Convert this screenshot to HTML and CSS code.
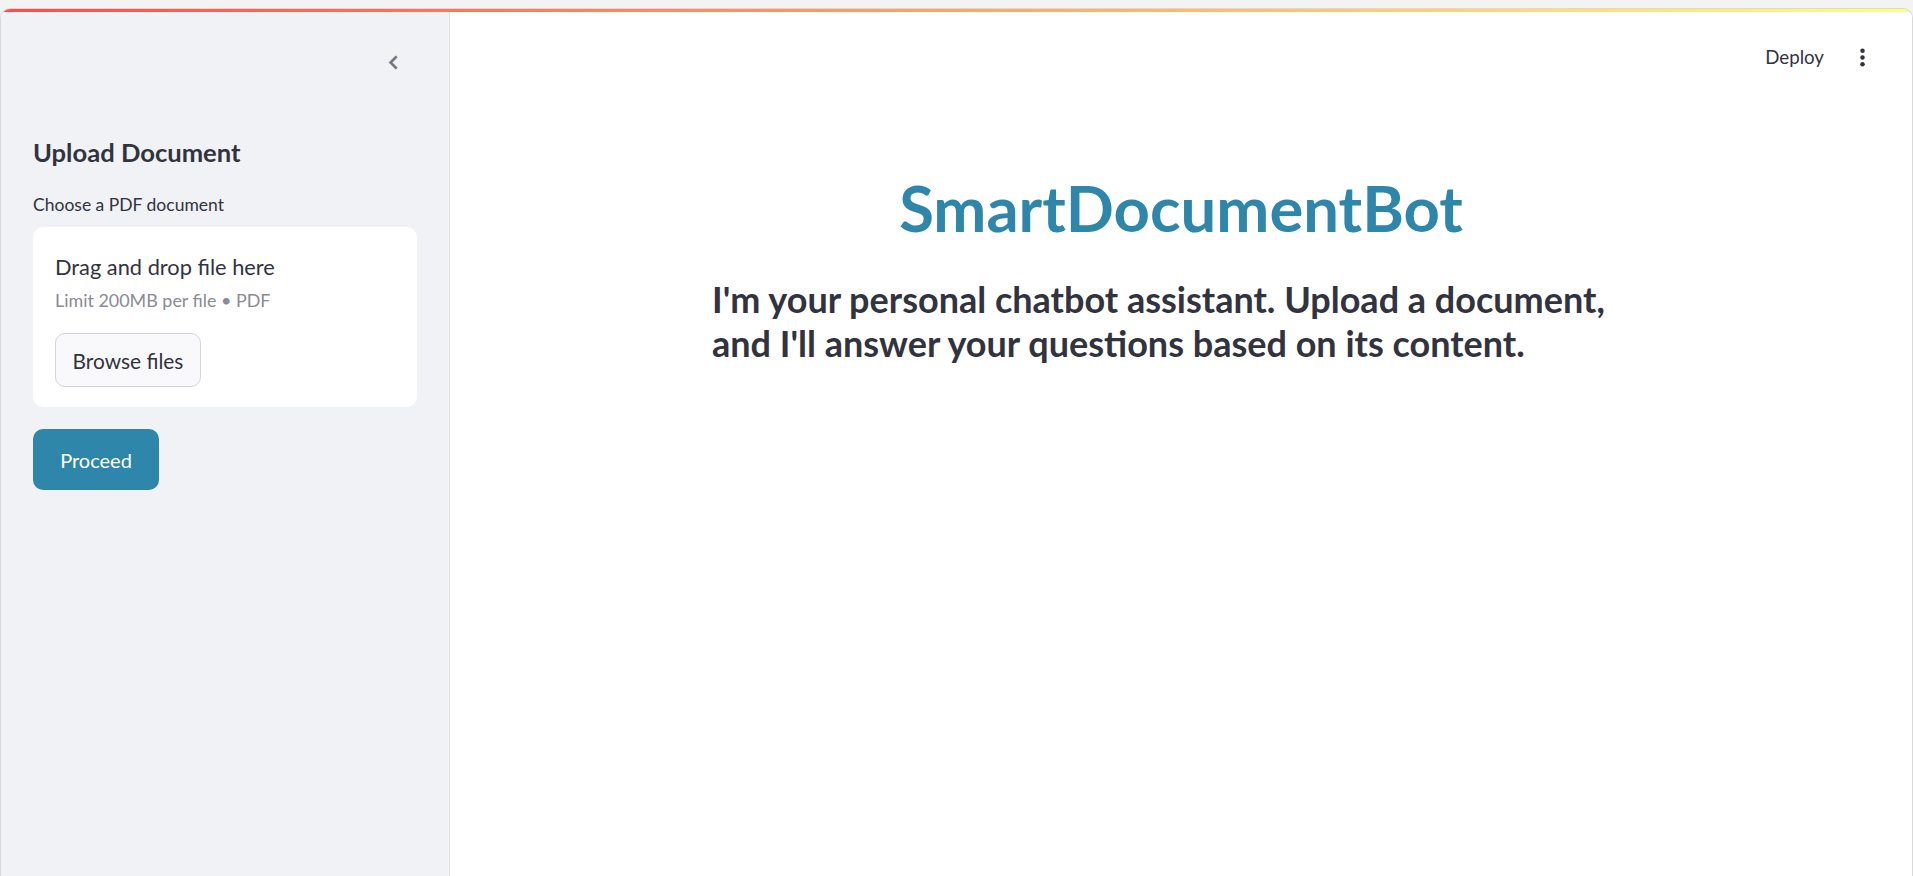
FILE: index.html
```html
<!DOCTYPE html>
<html lang="en">
<head>
<meta charset="utf-8">
<title>SmartDocumentBot</title>
<link rel="stylesheet" href="styles.css">
</head>
<body>
<div class="frame">
  <div class="decoration"></div>
  <div class="app">
    <aside class="sidebar">
      <div class="sidebar-top">
        <button class="collapse" aria-label="Collapse sidebar">
          <svg viewBox="0 0 24 24" width="27" height="27"><path d="M15.41 7.41L14 6l-6 6 6 6 1.41-1.41L10.83 12z" fill="currentColor" stroke="currentColor" stroke-width="0.4"/></svg>
        </button>
      </div>
      <h3 class="side-title">Upload Document</h3>
      <label class="field-label">Choose a PDF document</label>
      <section class="dropzone">
        <div class="dz-title">Drag and drop file here</div>
        <div class="dz-hint">Limit 200MB per file • PDF</div>
        <button class="btn-secondary">Browse files</button>
      </section>
      <button class="btn-primary">Proceed</button>
    </aside>
    <main class="main">
      <header class="toolbar">
        <span class="deploy">Deploy</span>
        <button class="kebab" aria-label="Main menu">
          <svg viewBox="0 0 24 24" width="27" height="27"><circle cx="12" cy="6" r="2" fill="currentColor"/><circle cx="12" cy="12" r="2" fill="currentColor"/><circle cx="12" cy="18" r="2" fill="currentColor"/></svg>
        </button>
      </header>
      <div class="block">
        <h1 class="title">SmartDocumentBot</h1>
        <p class="intro">I'm your personal chatbot assistant. Upload a document, and I'll answer your questions based on its content.</p>
      </div>
    </main>
  </div>
</div>
</body>
</html>
```
FILE: styles.css
```css
* { box-sizing: border-box; }
html, body { margin: 0; height: 100%; }
body {
  background: #f3f3f3;
  font-family: Lato, "Open Sans", sans-serif;
  color: #31333f;
}
button { font-family: inherit; }

.frame {
  margin-top: 8px;
  height: calc(100vh - 8px);
  border: 1px solid #d9d9d9;
  border-bottom: none;
  border-radius: 10px 10px 0 0;
  overflow: hidden;
  background: #fff;
  display: flex;
  flex-direction: column;
}
.decoration {
  height: 3px;
  flex: none;
  background: linear-gradient(90deg, #ff4b4b, #fffd80);
}
.app { flex: 1; display: flex; min-height: 0; }

/* Sidebar */
.sidebar {
  width: 449px;
  flex: none;
  background: #f0f2f6;
  border-right: 1px solid #e3e5ea;
  padding: 0 32px;
  display: flex;
  flex-direction: column;
  align-items: flex-start;
}
.sidebar-top {
  height: 100px;
  width: 100%;
  display: flex;
  justify-content: flex-end;
  align-items: center;
}
.collapse {
  width: 48px;
  height: 40px;
  border: none;
  background: transparent;
  color: #6f727d;
  padding: 0;
  display: flex;
  align-items: center;
  justify-content: center;
}
.side-title {
  margin: 24px 0 0;
  font-size: 25.6px;
  line-height: 32px;
  font-weight: 700;
  color: #31333f;
}
.field-label {
  margin-top: 25px;
  font-size: 17.5px;
  line-height: 24px;
  color: #31333f;
}
.dropzone {
  margin-top: 10px;
  width: 100%;
  height: 180px;
  background: #fff;
  border-radius: 10px;
  padding: 27px 22px 20px;
  display: flex;
  flex-direction: column;
  align-items: flex-start;
}
.dz-title {
  font-size: 21.8px;
  line-height: 25.6px;
  color: #31333f;
}
.dz-hint {
  margin-top: 9px;
  font-size: 17.9px;
  line-height: 22.4px;
  color: #8a8b94;
}
.btn-secondary {
  margin-top: 22px;
  width: 146px;
  height: 54px;
  border: 1px solid #d3d4d9;
  border-radius: 10px;
  background: #f9f9fb;
  color: #31333f;
  font-size: 20.9px;
  padding: 0;
}
.btn-primary {
  margin-top: 22px;
  width: 126px;
  height: 61px;
  border: none;
  border-radius: 10px;
  background: #2e86ab;
  color: #fff;
  font-size: 20px;
  padding: 0;
}

/* Main */
.main {
  flex: 1;
  background: #fff;
  display: flex;
  flex-direction: column;
}
.toolbar {
  height: 90px;
  flex: none;
  display: flex;
  justify-content: flex-end;
  align-items: center;
  gap: 22px;
  padding-right: 34px;
}
.deploy {
  font-size: 18.7px;
  color: #31333f;
}
.kebab {
  width: 32px;
  height: 40px;
  border: none;
  background: transparent;
  color: #31333f;
  padding: 0;
  display: flex;
  align-items: center;
  justify-content: center;
}
.block {
  width: 938px;
  margin: 0 auto;
}
.title {
  margin: 70px 0 0;
  text-align: center;
  font-size: 63.4px;
  line-height: 72px;
  font-weight: 700;
  color: #2e86ab;
}
.intro {
  margin: 33px 0 0;
  font-size: 36px;
  line-height: 44px;
  font-weight: 700;
  color: #31333f;
}
```
